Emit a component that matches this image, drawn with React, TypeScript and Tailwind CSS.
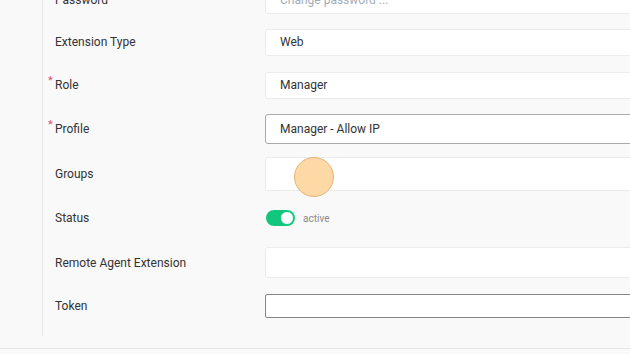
import React from "react";

function Row({ h, label, required, children }: { h: string; label: string; required?: boolean; children?: React.ReactNode }) {
  return (
    <div className={`flex items-center ${h}`}>
      <div className="relative w-[222px] shrink-0 pl-[12px] text-[12px] text-[#333]">
        {required && <span className="absolute left-[5px] top-[-3px] text-[11px] text-[#d9547f]">*</span>}
        {label}
      </div>
      <div className="flex-1 min-w-0">{children}</div>
    </div>
  );
}

export default function App() {
  return (
    <div className="relative h-[354px] w-[630px] overflow-hidden bg-[#f9f9f9]" style={{ fontFamily: "Roboto, 'Noto Sans', sans-serif" }}>
      <div className="-mt-[21px] pl-[42px]">
        <div className="border-l border-[#e6e6e6] pb-[9px]">
          <Row h="h-[42px]" label="Password">
            <div className="flex h-[28px] w-[420px] items-center rounded-[3px] border border-[#ececec] bg-white pl-[14px] text-[12px] text-[#a4adb8]">Change password ...</div>
          </Row>
          <Row h="h-[42px]" label="Extension Type">
            <div className="flex h-[27px] w-[420px] items-center rounded-[3px] border border-[#ececec] bg-white pl-[14px] text-[12px] text-[#333]">Web</div>
          </Row>
          <Row h="h-[44px]" label="Role" required>
            <div className="flex h-[27px] w-[420px] items-center rounded-[3px] border border-[#ececec] bg-white pl-[14px] text-[12px] text-[#333]">Manager</div>
          </Row>
          <Row h="h-[44px]" label="Profile" required>
            <div className="flex h-[30px] w-[420px] items-center rounded-[3px] border border-[#a9a9a9] bg-white pl-[14px] text-[12px] text-[#333]">Manager - Allow IP</div>
          </Row>
          <Row h="h-[45px]" label="Groups">
            <div className="h-[34px] w-[420px] rounded-[3px] border border-[#ececec] bg-white" />
          </Row>
          <Row h="h-[44px]" label="Status">
            <div className="flex items-center gap-[8px] pl-[1px]">
              <div className="flex h-[16px] w-[29px] items-center justify-end rounded-full bg-[#12c77d] pr-[1px]">
                <div className="h-[14px] w-[14px] rounded-full border border-[#12c77d] bg-white" />
              </div>
              <span className="text-[10px] text-[#8a8a8a]">active</span>
            </div>
          </Row>
          <Row h="h-[45px]" label="Remote Agent Extension">
            <div className="h-[31px] w-[420px] rounded-[3px] border border-[#ececec] bg-white" />
          </Row>
          <Row h="h-[42px]" label="Token">
            <div className="h-[24px] w-[420px] rounded-[2px] border border-[#858585] bg-white" />
          </Row>
        </div>
        <div className="mt-[12px] -ml-[42px] w-[630px] border-t border-[#e6e6e6]" />
      </div>
      <div className="absolute left-[294px] top-[157px] h-[40px] w-[40px] rounded-full border border-[#e6b273] bg-[#fdd9a6]" />
    </div>
  );
}
